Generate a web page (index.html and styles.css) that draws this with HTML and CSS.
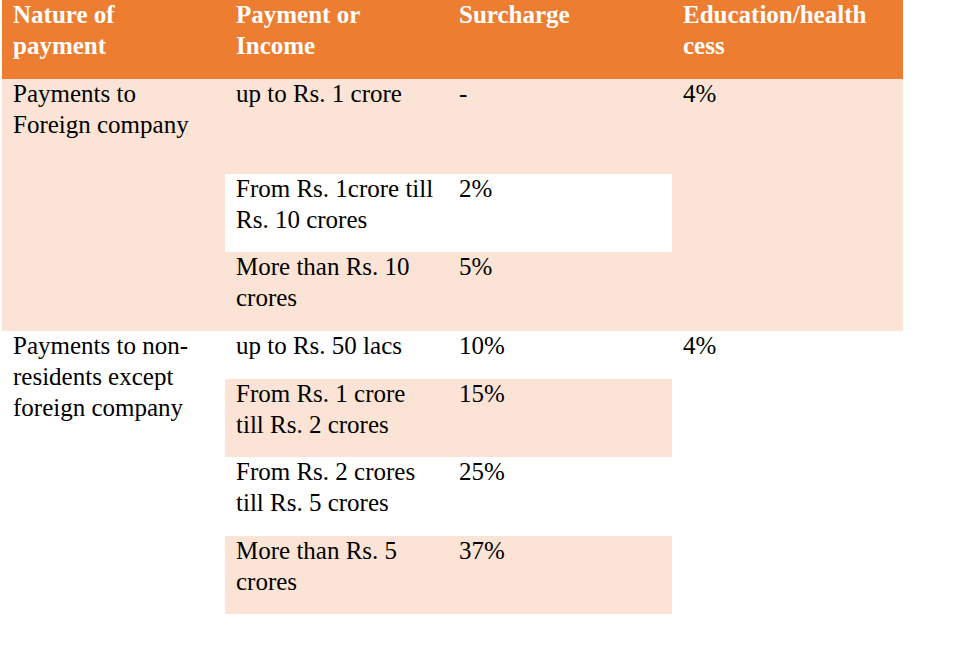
FILE: index.html
```html
<!DOCTYPE html>
<html lang="en">
<head>
<meta charset="utf-8">
<title>Surcharge table</title>
<link rel="stylesheet" href="styles.css">
</head>
<body>
<table class="tax">
  <colgroup>
    <col class="c1"><col class="c2"><col class="c3"><col class="c4">
  </colgroup>
  <thead>
    <tr class="h-head">
      <th><p class="t">Nature of payment</p></th>
      <th><p class="t">Payment or Income</p></th>
      <th><p class="t">Surcharge</p></th>
      <th><p class="t">Education/health cess</p></th>
    </tr>
  </thead>
  <tbody>
    <tr class="h-95">
      <td rowspan="3" class="peach"><p class="t">Payments to Foreign company</p></td>
      <td class="peach"><p class="t">up to Rs. 1 crore</p></td>
      <td class="peach"><p class="t">-</p></td>
      <td rowspan="3" class="peach"><p class="t">4%</p></td>
    </tr>
    <tr class="h-78">
      <td><p class="t">From Rs. 1crore till Rs. 10 crores</p></td>
      <td><p class="t">2%</p></td>
    </tr>
    <tr class="h-79">
      <td class="peach"><p class="t">More than Rs. 10 crores</p></td>
      <td class="peach"><p class="t">5%</p></td>
    </tr>
    <tr class="h-48">
      <td rowspan="4"><p class="t">Payments to non-residents except foreign company</p></td>
      <td><p class="t">up to Rs. 50 lacs</p></td>
      <td><p class="t">10%</p></td>
      <td rowspan="4"><p class="t">4%</p></td>
    </tr>
    <tr class="h-78">
      <td class="peach"><p class="t">From Rs. 1 crore till Rs. 2 crores</p></td>
      <td class="peach"><p class="t">15%</p></td>
    </tr>
    <tr class="h-79">
      <td><p class="t">From Rs. 2 crores till Rs. 5 crores</p></td>
      <td><p class="t">25%</p></td>
    </tr>
    <tr class="h-78">
      <td class="peach"><p class="t">More than Rs. 5 crores</p></td>
      <td class="peach"><p class="t">37%</p></td>
    </tr>
  </tbody>
</table>
</body>
</html>
```

FILE: styles.css
```css
html, body {
  margin: 0;
  padding: 0;
  background: #ffffff;
}

body {
  font-family: "Liberation Serif", "Times New Roman", Tinos, serif;
  font-size: 25px;
  line-height: 31px;
  color: #000000;
}

.tax {
  margin-left: 2px;
  border-collapse: collapse;
  border-spacing: 0;
  table-layout: fixed;
  width: 901px;
}

.c1 { width: 223px; }
.c2 { width: 223px; }
.c3 { width: 224px; }
.c4 { width: 231px; }

.tax th,
.tax td {
  padding: 0 13px 0 11px;
  vertical-align: top;
  text-align: left;
  border: none;
}

.tax th {
  background: #ed7d31;
  color: #ffffff;
  font-weight: bold;
}

.tax td.peach {
  background: #fbe4d5;
}

.t {
  margin: -1px 0 0 0;
}

.h-head { height: 79px; }
.h-95 { height: 95px; }
.h-78 { height: 78px; }
.h-79 { height: 79px; }
.h-48 { height: 48px; }
```
